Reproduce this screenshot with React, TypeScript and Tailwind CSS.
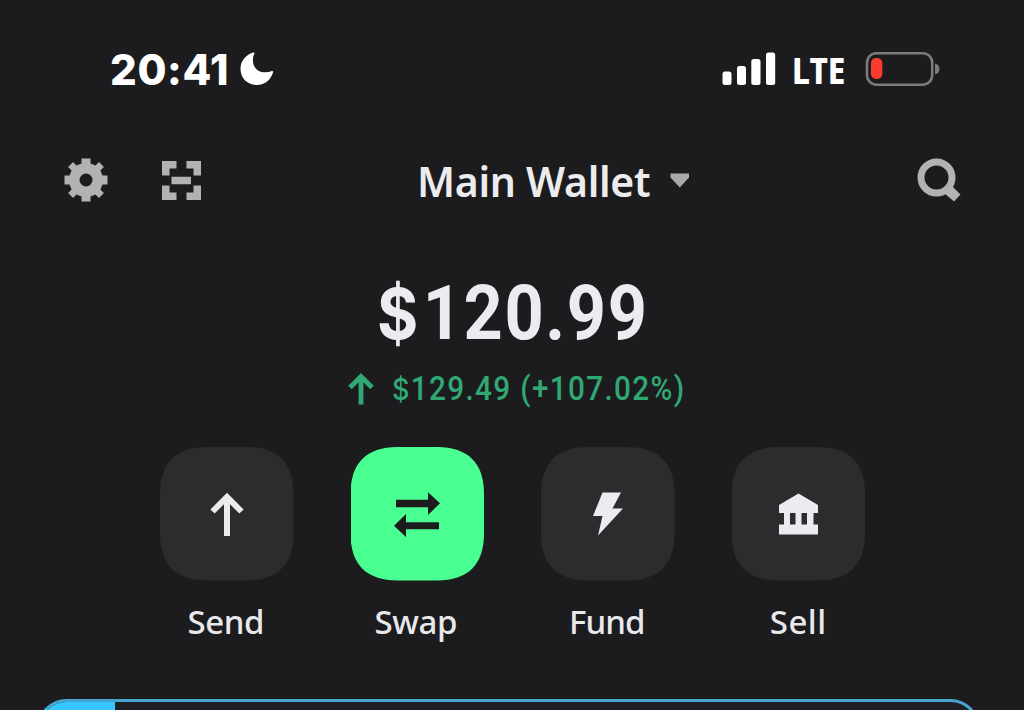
import type { ReactNode } from 'react';

interface ActionProps {
  label: string;
  primary?: boolean;
  labelClass: string;
  children: ReactNode;
}

function Action({ label, primary, labelClass, children }: ActionProps) {
  return (
    <div className="flex w-[133.5px] flex-col items-center">
      <button
        type="button"
        className={`flex h-[133.5px] w-[133.5px] items-center justify-center [clip-path:path('M0_47C0_16_16_0_47_0H86.5C117.5_0_133.5_16_133.5_47V86.5C133.5_117.5_117.5_133.5_86.5_133.5H47C16_133.5_0_117.5_0_86.5Z')] ${
          primary ? 'bg-[#4aff91]' : 'bg-[#2c2c2e]'
        }`}
      >
        {children}
      </button>
      <span
        className={`mt-[17px] whitespace-nowrap font-['Noto_Sans',sans-serif] text-[33px] leading-[48px] font-medium text-[#e9e9ec] ${labelClass}`}
      >
        {label}
      </span>
    </div>
  );
}

function StatusBar() {
  return (
    <div className="flex h-[100px] items-start justify-between pt-[44px] pr-[84px] pl-[110px] text-white">
      <div className="flex h-[50px] items-center">
        <span className="w-[130px] whitespace-nowrap pt-[2px] font-['Inter',sans-serif] text-[42px] leading-[50px] font-extrabold tracking-[0.6px]">
          20:41
        </span>
        <svg className="h-[34px] w-[34px]" viewBox="0 0 34 34" fill="currentColor">
          <path d="M13.2 0.6C14.2 0 14.8 0.8 14.3 1.7C13.3 3.7 12.9 5.7 12.9 8C12.9 15.8 18 20.3 25.6 20.3C28 20.3 30 19.9 31.8 19.1C32.8 18.7 33.5 19.3 33.1 20.3C30.7 28.2 24.8 33 17 33C7.4 33 0.5 26.3 0.5 16.7C0.5 9.4 5.5 3.1 13.2 0.6Z" />
        </svg>
      </div>
      <div className="flex h-[50px] items-center">
        <svg className="h-[34px] w-[54px]" viewBox="0 0 54 34" fill="currentColor">
          <rect x="0.5" y="19.5" width="9" height="13.5" rx="2.5" />
          <rect x="15" y="14" width="9" height="19" rx="2.5" />
          <rect x="29.3" y="7" width="9.2" height="26" rx="2.5" />
          <rect x="44" y="0.5" width="9.2" height="32.5" rx="2.5" />
        </svg>
        <span className="ml-[16px] w-[54px] origin-left scale-x-[0.89] whitespace-nowrap pt-[1px] font-['Noto_Sans',sans-serif] text-[35.5px] leading-[50px] font-extrabold">
          LTE
        </span>
        <svg className="ml-[18px] h-[36px] w-[76px]" viewBox="0 0 76 36">
          <rect x="3" y="2.2" width="65.2" height="31.5" rx="9.5" fill="none" stroke="#7c7c7e" strokeWidth="2.5" />
          <rect x="7" y="7" width="11.3" height="21" rx="5" fill="#fb3b2f" />
          <path d="M71 12.5C74 13.3 75.5 15.4 75.5 18S74 22.7 71 23.5Z" fill="#7c7c7e" />
        </svg>
      </div>
    </div>
  );
}

function Header() {
  return (
    <div className="mt-[50px] flex h-[60px] items-center pl-[64px] text-[#b2b2b5]">
      <svg className="h-[44px] w-[44px]" viewBox="0 0 44 44" fill="currentColor">
        <path
          fillRule="evenodd"
          d="M17.5 0.5H26.5V5.5L31.5 7.6L35 4.1L39.9 9L36.4 12.5L38.5 17.5H43.5V26.5H38.5L36.4 31.5L39.9 35L35 39.9L31.5 36.4L26.5 38.5V43.5H17.5V38.5L12.5 36.4L9 39.9L4.1 35L7.6 31.5L5.5 26.5H0.5V17.5H5.5L7.6 12.5L4.1 9L9 4.1L12.5 7.6L17.5 5.5ZM22 15.5A6.5 6.5 0 1 0 22 28.5A6.5 6.5 0 1 0 22 15.5Z"
        />
      </svg>
      <svg className="ml-[54px] h-[39px] w-[39px]" viewBox="0 0 39 39" fill="currentColor">
        <path d="M0 0H14.5V7.5H7.5V14.5H0ZM24.5 0H39V14.5H31.5V7.5H24.5ZM0 24.5H7.5V31.5H14.5V39H0ZM31.5 24.5H39V39H24.5V31.5H31.5ZM9.5 15.7H29V23.3H9.5Z" />
      </svg>
      <div className="ml-[216px] flex w-[300px] items-center">
        <span className="w-[236px] whitespace-nowrap pt-[2px] font-['Noto_Sans',sans-serif] text-[41px] leading-[56px] font-semibold tracking-[-0.3px] text-[#ececef]">
          Main Wallet
        </span>
        <svg className="ml-[17px] h-[15px] w-[20px]" viewBox="0 0 20 15" fill="#a9a9ab">
          <path d="M0.5 0.5H19V4.5L9.8 14.5L0.5 4.5Z" />
        </svg>
      </div>
      <svg className="ml-[200px] h-[44px] w-[44px]" viewBox="0 0 44 44">
        <circle cx="19.5" cy="19.5" r="15.5" fill="none" stroke="currentColor" strokeWidth="7" />
        <path d="M27 35L34 27L43.5 36.5L37 43.5Z" fill="currentColor" />
      </svg>
    </div>
  );
}

export default function App() {
  return (
    <div className="h-[710px] w-[1024px] overflow-hidden bg-[#1c1c1e]">
      <StatusBar />
      <Header />

      <div className="mt-[58px] flex h-[90px] pl-[377px]">
        <span className="origin-left scale-x-[0.9] whitespace-nowrap font-['Roboto',sans-serif] text-[76px] leading-[90px] font-bold tracking-[1.8px] text-[#ebebf0]">
          <span className="font-['Inter',sans-serif] text-[70px] font-bold tracking-[5px]">$</span>120.99
        </span>
      </div>
      <div className="mt-[9px] flex h-[44px] items-center pl-[348px] text-[#30a873]">
        <svg className="h-[32px] w-[26px]" viewBox="0 0 26 32" fill="none" stroke="currentColor" strokeWidth="4.8">
          <path d="M13 31.5V3M2 14.5L13 3.5L24 14.5" />
        </svg>
        <span className="ml-[18px] origin-left scale-x-[0.9] whitespace-nowrap font-['Roboto',sans-serif] text-[33px] leading-[44px] font-medium tracking-[1.5px]">
          <span className="font-['Inter',sans-serif] text-[30px]">$</span>129.49 (+107.02%)
        </span>
      </div>

      <div className="mt-[36px] flex gap-[57px] pl-[160px]">
        <Action label="Send" labelClass="tracking-[-0.4px] -ml-[2px]">
          <svg className="h-[46px] w-[36px]" viewBox="0 0 36 46" fill="none" stroke="#ebebee" strokeWidth="6">
            <path d="M18 45V6M3.5 20.5L18 6L32.5 20.5" />
          </svg>
        </Action>
        <Action label="Swap" labelClass="tracking-[-0.4px] -ml-[3px]" primary>
          <svg className="h-[46px] w-[48px]" viewBox="0 0 48 46" fill="#1c1c1e">
            <path d="M3 8.7H35V1.2L47 12.3L35 24V16.2H3ZM46 31.2H13V23L1 34.7L13 46V38.3H46Z" />
          </svg>
        </Action>
        <Action label="Fund" labelClass="tracking-[-1px] -ml-[2px]">
          <svg className="h-[44px] w-[30px]" viewBox="0 0 30 44" fill="#ebebf0">
            <path d="M9.5 0.5H28L19.5 16.5H30L5 43.5L9.5 24H0Z" />
          </svg>
        </Action>
        <Action label="Sell" labelClass="tracking-[0.5px]">
          <svg className="h-[42px] w-[39px]" viewBox="0 0 39 42" fill="#ebebf0">
            <path d="M19.5 0.5L39 12V20H34.5V31.5H39V41.5H0V31.5H5V20H0V12ZM11 20V31.5H16.5V20ZM22.5 20V31.5H28V20Z" fillRule="evenodd" />
          </svg>
        </Action>
      </div>

      <div className="mt-[53px] ml-[38px] h-[100px] w-[941px] overflow-hidden rounded-[28px] border-[3px] border-[#48a5d2] border-l-[#35c6ff] bg-[#1f2023]">
        <div className="h-full w-[74px] bg-[#35c6ff]" />
      </div>
    </div>
  );
}
